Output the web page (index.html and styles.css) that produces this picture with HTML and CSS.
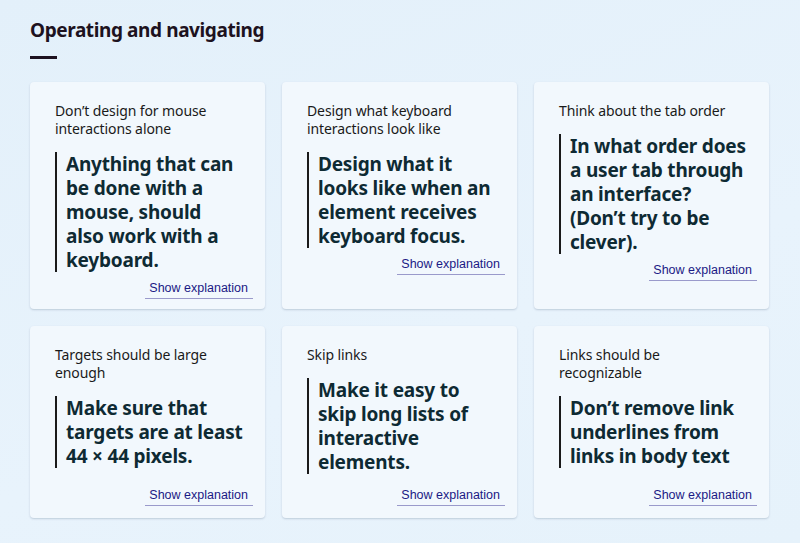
FILE: index.html
```html
<!DOCTYPE html>
<html lang="en">
<head>
  <meta charset="UTF-8">
  <title>Operating and navigating</title>
  <link rel="stylesheet" href="styles.css">
</head>
<body>
<div class="section">
  <h2 class="section-title">Operating and navigating</h2>
  <div class="rule"></div>
  <div class="grid">
    <div class="card">
      <p class="card-title">Don’t design for mouse interactions alone</p>
      <blockquote class="card-quote">Anything that can be done with a mouse, should also work with a keyboard.</blockquote>
      <a href="javascript:;" class="more">Show explanation</a>
    </div>
    <div class="card">
      <p class="card-title">Design what keyboard interactions look like</p>
      <blockquote class="card-quote">Design what it looks like when an element receives keyboard focus.</blockquote>
      <a href="javascript:;" class="more">Show explanation</a>
    </div>
    <div class="card">
      <p class="card-title">Think about the tab order</p>
      <blockquote class="card-quote">In what order does a user tab through an interface? (Don’t try to be clever).</blockquote>
      <a href="javascript:;" class="more">Show explanation</a>
    </div>
    <div class="card pinned">
      <p class="card-title">Targets should be large enough</p>
      <blockquote class="card-quote">Make sure that targets are at least 44 × 44 pixels.</blockquote>
      <a href="javascript:;" class="more">Show explanation</a>
    </div>
    <div class="card pinned">
      <p class="card-title">Skip links</p>
      <blockquote class="card-quote">Make it easy to skip long lists of interactive elements.</blockquote>
      <a href="javascript:;" class="more">Show explanation</a>
    </div>
    <div class="card pinned">
      <p class="card-title">Links should be recognizable</p>
      <blockquote class="card-quote">Don’t remove link underlines from links in body text</blockquote>
      <a href="javascript:;" class="more">Show explanation</a>
    </div>
  </div>
</div>
</body>
</html>
```

FILE: styles.css
```css
* {
  margin: 0;
  padding: 0;
  box-sizing: border-box;
}
body {
  background: linear-gradient(160deg, #e3f0fa 0%, #e8f3fc 60%, #e6f2fb 100%);
  font-family: "Noto Sans", "Open Sans", sans-serif;
  min-height: 543px;
}
.section {
  padding: 18px 31px 0 30px;
}
.section-title {
  font-size: 19px;
  line-height: 24px;
  font-weight: bold;
  letter-spacing: -0.4px;
  color: #1d1220;
}
.rule {
  width: 27px;
  height: 3px;
  background: #1d1220;
  margin: 14px 0 23px 0;
}
.grid {
  display: grid;
  grid-template-columns: repeat(3, 235px);
  grid-template-rows: 227px 192px;
  column-gap: 17px;
  row-gap: 17px;
}
.card {
  background: #f2f8fd;
  border-radius: 4px;
  box-shadow: 0 1px 2px rgba(40,70,100,.22);
  padding: 20px 22px 12px 25px;
  display: flex;
  flex-direction: column;
  align-items: flex-start;
}
.card-title {
  font-size: 14px;
  line-height: 18px;
  letter-spacing: -0.1px;
  color: #1a1a1a;
  padding-right: 8px;
}
.card-quote {
  margin-top: 14px;
  border-left: 2px solid #1a1a1a;
  padding-left: 9px;
  font-size: 19px;
  line-height: 24px;
  font-weight: bold;
  letter-spacing: -0.2px;
  color: #0e2a33;
}
.more {
  align-self: flex-end;
  margin: 9px -10px 0 0;
  padding: 0 5px 3px 4px;
  font-family: "Liberation Sans", Arial, sans-serif;
  font-size: 12.5px;
  line-height: 14px;
  color: #1b1a85;
  text-decoration: none;
  border-bottom: 1.5px solid #9a9acb;
}
.pinned .more {
  margin-top: auto;
}
```
